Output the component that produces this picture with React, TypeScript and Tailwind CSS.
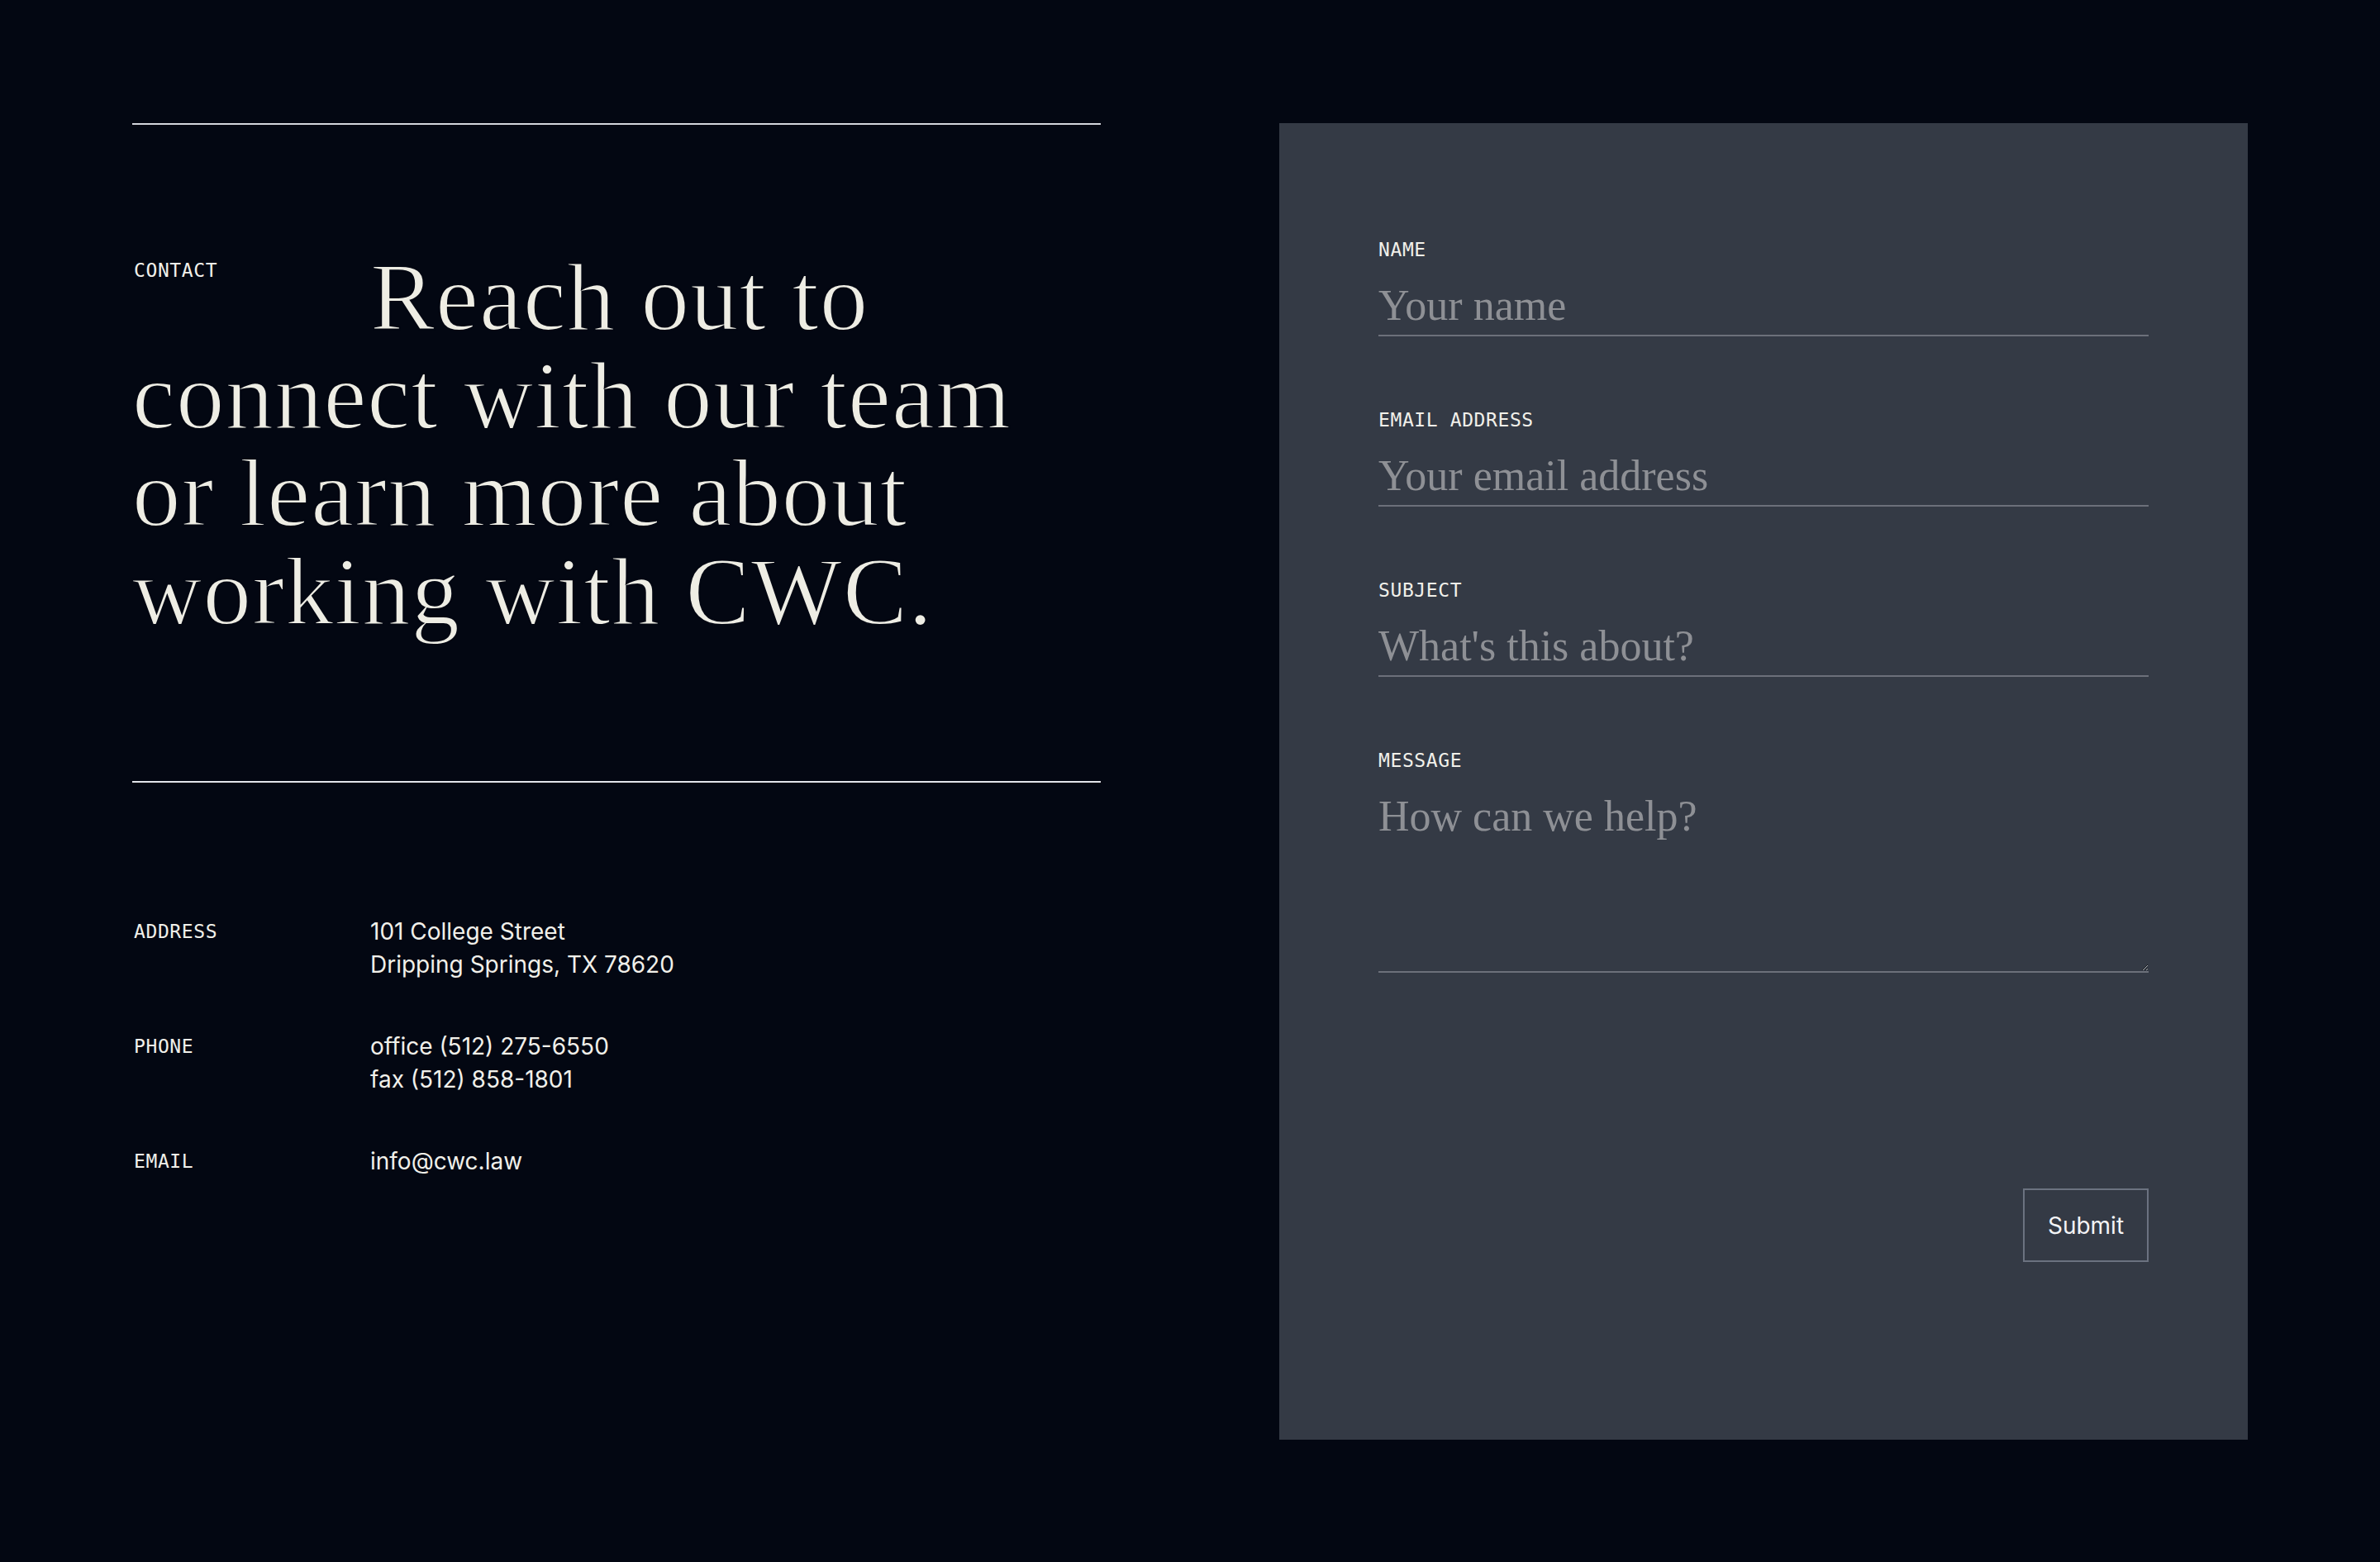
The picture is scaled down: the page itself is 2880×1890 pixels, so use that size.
import React from "react";

function Label({ children }: { children: React.ReactNode }) {
  return (
    <div className="font-['DejaVu_Sans_Mono','Liberation_Mono',monospace] text-[23px] leading-[32px] tracking-[0.6px] uppercase text-[#f1f0ea]">
      {children}
    </div>
  );
}

function InfoRow({ label, lines }: { label: string; lines: string[] }) {
  return (
    <div className="flex items-start">
      <div className="w-[288px] shrink-0 pl-[2px] font-['DejaVu_Sans_Mono','Liberation_Mono',monospace] text-[23px] leading-[40px] tracking-[0.6px] uppercase text-[#f1f0ea]">
        {label}
      </div>
      <div className="font-['Inter','Liberation_Sans',sans-serif] text-[28px] leading-[40px] text-[#f1f0ea]">
        {lines.map((l) => (
          <div key={l}>{l}</div>
        ))}
      </div>
    </div>
  );
}

function Field({ label, placeholder, type = "text" }: { label: string; placeholder: string; type?: string }) {
  return (
    <div className="flex flex-col">
      <Label>{label}</Label>
      <input
        type={type}
        placeholder={placeholder}
        className="mt-[15px] h-[74px] w-full bg-transparent border-0 border-b-2 border-[#6c707a] outline-none font-['Liberation_Serif','Times_New_Roman',serif] text-[52px] leading-[1.2] text-[#eeede6] placeholder:text-[#8e9095]"
      />
    </div>
  );
}

export default function App() {
  return (
    <div className="min-h-screen w-full bg-[#030712]">
      <div className="flex items-start gap-[216px] px-[160px] pt-[149px]">
        {/* Left column */}
        <div className="w-[1172px] shrink-0">
          <div className="border-t-2 border-[#d3d6dd] pt-[150px]">
            <div className="font-['Liberation_Serif','Times_New_Roman',serif] text-[117px] leading-[118.5px] text-[#eeede4]">
              <div className="float-left w-[288px] mt-[10px] pl-[2px] font-['DejaVu_Sans_Mono','Liberation_Mono',monospace] text-[23px] leading-[32px] tracking-[0.6px] uppercase text-[#f1f0ea]">
                Contact
              </div>
              <h1 className="font-normal tracking-[1px] [-webkit-text-stroke:2px_#030712] [paint-order:normal]">
                Reach out to
                <br />
                connect with our team
                <br />
                or learn more about
                <br />
                working with CWC.
              </h1>
            </div>
          </div>
          <div className="mt-[170px] border-t-2 border-[#e3e5ea] pt-[160px]">
            <div className="flex flex-col gap-[59px]">
              <InfoRow label="Address" lines={["101 College Street", "Dripping Springs, TX 78620"]} />
              <InfoRow label="Phone" lines={["office (512) 275-6550", "fax (512) 858-1801"]} />
              <InfoRow label="Email" lines={["info@cwc.law"]} />
            </div>
          </div>
        </div>

        {/* Right column: form panel */}
        <form
          className="w-[1172px] shrink-0 bg-[#343a45] px-[120px] pt-[137px] pb-[215px]"
          onSubmit={(e) => e.preventDefault()}
        >
          <div className="flex flex-col gap-[85px]">
            <Field label="Name" placeholder="Your name" />
            <Field label="Email Address" placeholder="Your email address" type="email" />
            <Field label="Subject" placeholder="What's this about?" />
            <div className="flex flex-col">
              <Label>Message</Label>
              <textarea
                placeholder="How can we help?"
                className="mt-[15px] h-[226px] w-full bg-transparent border-0 border-b-2 border-[#6c707a] outline-none pt-[6px] font-['Liberation_Serif','Times_New_Roman',serif] text-[52px] leading-[1.2] text-[#eeede6] placeholder:text-[#8e9095]"
              />
            </div>
          </div>
          <div className="mt-[261px] flex justify-end">
            <button
              type="submit"
              className="w-[152px] h-[89px] border-2 border-[#6b7280] bg-transparent font-['Inter','Liberation_Sans',sans-serif] text-[28px] leading-[40px] text-[#f3f4f6]"
            >
              Submit
            </button>
          </div>
        </form>
      </div>
    </div>
  );
}
